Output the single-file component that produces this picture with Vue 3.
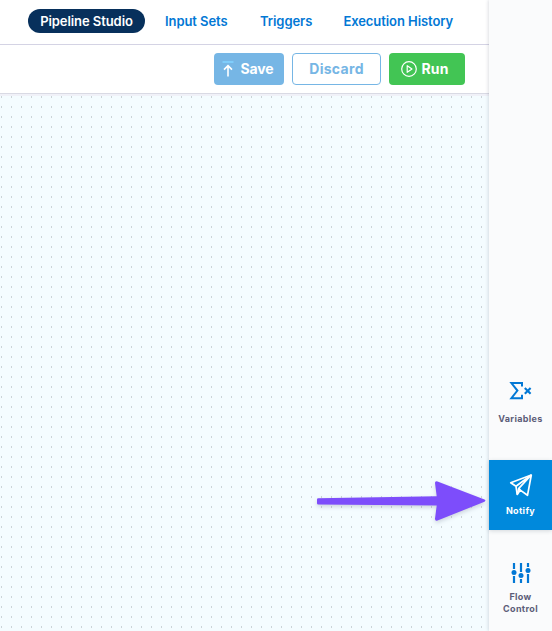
<script setup>
const tabs = [
  { label: 'Pipeline Studio', key: 'studio', active: true },
  { label: 'Input Sets', key: 'inputs' },
  { label: 'Triggers', key: 'triggers' },
  { label: 'Execution History', key: 'history' }
]
</script>

<template>
  <div class="page">
    <main class="main">
      <nav class="tabs">
        <a v-for="tab in tabs" :key="tab.key" class="tab" :class="[tab.key, { active: tab.active }]">{{ tab.label }}</a>
      </nav>
      <div class="toolbar">
        <button class="btn save">
          <svg width="12" height="16" viewBox="0 0 12 16" fill="none">
            <path d="M.5 1H11.5" stroke="#7fcdfb" stroke-width="2" />
            <path d="M6 15.5V4.5M2 8.6L6 4.6L10 8.6" stroke="#fff" stroke-width="1.6" />
          </svg>
          <span>Save</span>
        </button>
        <button class="btn discard"><span>Discard</span></button>
        <button class="btn run">
          <svg width="16" height="16" viewBox="0 0 16 16" fill="none" stroke="#fff" stroke-width="1.2" stroke-linejoin="round">
            <circle cx="8" cy="8" r="7.3" />
            <path d="M6.2 4.7L11 8L6.2 11.3Z" />
          </svg>
          <span>Run</span>
        </button>
      </div>
      <section class="canvas">
        <svg class="arrow" width="180" height="54" viewBox="0 0 180 54">
          <path d="M8.3 22.2L126.7 20.3L125 7Q125 4.5 127.5 5.4L174.5 23.4Q176.3 24.6 174.5 25.8L127.5 44.5Q125 45.3 125 42.8L126.7 29.5L8.3 28.6Q7 28.5 7 27.3V23.5Q7 22.3 8.3 22.2Z" fill="#7d4dfb" />
        </svg>
      </section>
    </main>
    <aside class="rail">
      <div class="item variables">
        <svg width="25" height="20" viewBox="0 0 25 20" fill="none" stroke="#0278d5">
          <path d="M14 5.4V2H3.4L9.4 9.6L3.4 17.2H14V13.8" stroke-width="2" />
          <path d="M16.8 6.9L22.6 12.7M22.6 6.9L16.8 12.7" stroke-width="2.1" />
        </svg>
        <span>Variables</span>
      </div>
      <div class="item notify">
        <svg width="24" height="24" viewBox="0 0 24 24" fill="none" stroke="#fff" stroke-width="1.7" stroke-linejoin="round">
          <path d="M22.3 2L1.7 9.7L7 13.3L8.2 21.5L11.3 17.1L18.5 22.3Z" />
          <path d="M22.3 2L7 13.3M22.3 2L9.8 15.3L8.2 21.5M9.8 15.3L11.3 17.1" />
        </svg>
        <span>Notify</span>
      </div>
      <div class="item flow">
        <svg width="21" height="20" viewBox="0 0 21 20">
          <path d="M4 0V6M4 13V20M11 0V9M11 16V20M18 0V4M18 11V20" stroke="#0278d5" stroke-width="2.2" />
          <g fill="#0278d5">
            <circle cx="4" cy="9.5" r="2.5" />
            <circle cx="11" cy="12.5" r="2.5" />
            <circle cx="18" cy="7.5" r="2.5" />
          </g>
        </svg>
        <span>Flow<br />Control</span>
      </div>
    </aside>
  </div>
</template>

<style>
body {
  margin: 0;
  overflow: hidden;
}
</style>

<style scoped>
.page {
  display: grid;
  grid-template-columns: 489px 63px;
  height: 631px;
  font-family: Inter, sans-serif;
  background: #fff;
}
.main {
  display: flex;
  flex-direction: column;
  min-width: 0;
}
.tabs {
  box-sizing: border-box;
  height: 45px;
  padding: 9px 0 0 28px;
  display: flex;
  align-items: flex-start;
  border-bottom: 1px solid #d4d3e4;
}
.tab {
  height: 24px;
  line-height: 24px;
  font-size: 13px;
  font-weight: 600;
  letter-spacing: -0.07px;
  color: #0278d5;
  white-space: nowrap;
}
.studio {
  box-sizing: border-box;
  width: 117px;
  text-align: center;
  border-radius: 12px;
}
.tab.active {
  background: #07305c;
  color: #fff;
}
.inputs {
  width: 95px;
  margin-left: 20px;
}
.triggers {
  width: 83.4px;
}
.toolbar {
  box-sizing: border-box;
  height: 48px;
  padding: 8px 24px 0 0;
  display: flex;
  justify-content: flex-end;
  gap: 8px;
}
.btn {
  box-sizing: border-box;
  height: 32px;
  border: 0;
  border-radius: 4px;
  padding: 0;
  display: flex;
  align-items: center;
  justify-content: center;
  font: 700 14px/20px Inter, sans-serif;
  color: #fff;
}
.save {
  width: 70px;
  gap: 6px;
  padding-right: 2px;
  letter-spacing: -0.1px;
  background: #76b6e5;
}
.discard {
  width: 89px;
  border: 1px solid #76b6e5;
  background: #fff;
  color: #76b6e5;
  letter-spacing: 0.3px;
}
.run {
  width: 76px;
  gap: 4px;
  padding-right: 4px;
  letter-spacing: 0.2px;
  background: #42c554;
}
.canvas {
  flex: 1;
  position: relative;
  border-top: 1px solid #d9dae4;
  box-shadow: inset 0 2px #f0f1f8;
  background-color: #f4fcff;
  background-image: linear-gradient(#f4fcff 8px, transparent 8px), linear-gradient(90deg, #cbd4d8 1px, transparent 1px);
  background-size: 10px 10px;
  background-position: 0 -6px, 1px 0;
}
.arrow {
  position: absolute;
  left: 310px;
  top: 381.6px;
  filter: drop-shadow(0 2px 2px rgba(40, 50, 80, 0.2));
}
.rail {
  position: relative;
  display: flex;
  flex-direction: column;
  background: #fafbfc;
  box-shadow: -1px 0 3px rgba(50, 65, 90, 0.16);
}
.item {
  display: flex;
  flex-direction: column;
  align-items: center;
  text-align: center;
  font-size: 9px;
  line-height: 12px;
  font-weight: 700;
  letter-spacing: 0.35px;
  color: #5c5d78;
}
.variables {
  margin-top: 381px;
  height: 79px;
  gap: 12px;
}
.notify {
  box-sizing: border-box;
  height: 70px;
  padding-top: 13px;
  gap: 8px;
  background: #0089dc;
  color: #fff;
  box-shadow: 0 1px 4px rgba(40, 60, 80, 0.18);
}
.flow {
  padding-top: 33px;
  gap: 8px;
}
</style>
